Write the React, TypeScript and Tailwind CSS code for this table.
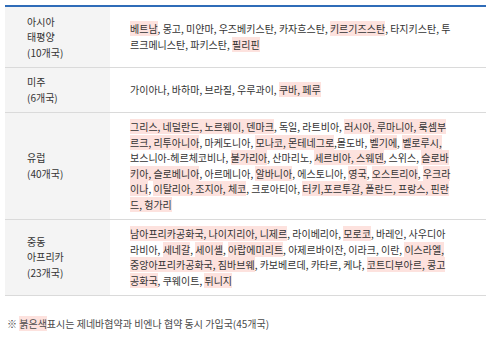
const rows: { region: string[]; lines: string[] }[] = [
  {
    region: ["아시아", "태평양", "(10개국)"],
    lines: [
      "[베트남], 몽고, 미얀마, 우즈베키스탄, 카자흐스탄, [키르기즈스탄], 타지키스탄, 투",
      "르크메니스탄, 파키스탄, [필리핀]",
    ],
  },
  {
    region: ["미주", "(6개국)"],
    lines: ["가이아나, 바하마, 브라질, 우루과이, [쿠바, 페루]"],
  },
  {
    region: ["유럽", "(40개국)"],
    lines: [
      "[그리스, 네덜란드, 노르웨이, 덴마크], 독일, 라트비아, [러시아, 루마니아, 룩셈부]",
      "[르크, 리투아니아], 마케도니아, [모나코, 몬테네그로],몰도바, [벨기에], [벨로루시,]",
      "보스니아-헤르체코비나, [불가리아], 산마리노, [세르비아, 스웨덴], 스위스, [슬로바]",
      "[키아, 슬로베니아], 아르메니아, [알바니아], 에스토니아, [영국], [오스트리아], [우크라]",
      "[이나], [이탈리아, 조지아, 체코], 크로아티아, [터키,포르투갈, 폴란드, 프랑스, 핀란]",
      "[드, 헝가리]",
    ],
  },
  {
    region: ["중동", "아프리카", "(23개국)"],
    lines: [
      "[남아프리카공화국, 나이지리아, 니제르], 라이베리아, [모로코], 바레인, 사우디아",
      "라비아, [세네갈], [세이셸], [아랍에미리트], 아제르바이잔, 이라크, 이란, [이스라엘,]",
      "[중앙아프리카공화국, 짐바브웨], 카보베르데, 카타르, 케냐, [코트디부아르, 콩고]",
      "[공화국], 쿠웨이트, [튀니지]",
    ],
  },
];

function Line({ text }: { text: string }) {
  const parts = text.split(/(\[[^\]]+\])/).filter(Boolean);
  return (
    <div className="whitespace-pre">
      {parts.map((p, i) =>
        p.startsWith("[") ? (
          <span key={i} className="bg-[#fde2de]">
            {p.slice(1, -1)}
          </span>
        ) : (
          <span key={i}>{p}</span>
        )
      )}
    </div>
  );
}

export default function App() {
  return (
    <div className="w-[486px] h-[338px] bg-white text-[10px] leading-[15.5px] text-[#333] font-['Noto_Sans_CJK_KR','Noto_Sans',sans-serif] overflow-hidden">
      <div className="ml-[5px] mt-[5px] border-t-2 border-[#2f6cb8]">
        {rows.map((r, i) => (
          <div key={i} className="flex border-b border-[#dadada]">
            <div className="w-[105px] shrink-0 bg-[#f4f4f4] pl-[22px] py-[6.5px] flex flex-col justify-center">
              {r.region.map((t) => (
                <div key={t}>{t}</div>
              ))}
            </div>
            <div className="flex-1 pl-[20px] py-[6.5px] flex flex-col justify-center">
              {r.lines.map((l, j) => (
                <Line key={j} text={l} />
              ))}
            </div>
          </div>
        ))}
      </div>
      <div className="mt-[20px] ml-[7px] text-[#4a4a4a]">
        ※ <span className="bg-[#fde2de]">붉은색</span>표시는 제네바협약과 비엔나 협약 동시 가입국(45개국)
      </div>
    </div>
  );
}
